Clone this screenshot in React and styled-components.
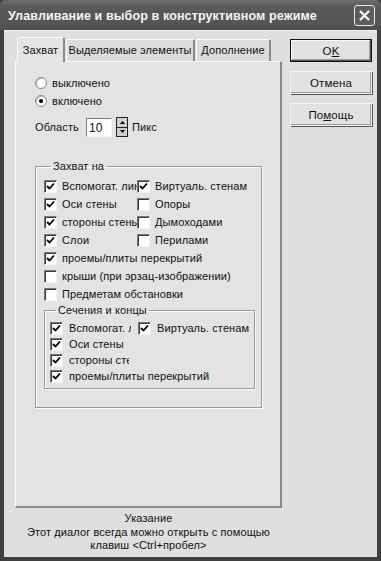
import React from "react";
import styled, { createGlobalStyle } from "styled-components";

const GlobalStyle = createGlobalStyle`
  html, body {
    margin: 0;
    padding: 0;
    background: #3a3a3a;
  }
  * {
    box-sizing: border-box;
  }
`;

const Window = styled.div`
  width: 381px;
  height: 561px;
  display: flex;
  flex-direction: column;
  background: #404040;
  font-family: "Liberation Sans", Arial, sans-serif;
  font-size: 11px;
  letter-spacing: 0.1px;
  color: #111;
`;

const TitleBar = styled.div`
  height: 30px;
  flex: none;
  display: flex;
  align-items: center;
  justify-content: space-between;
  padding: 0 6px 0 8px;
  background: linear-gradient(#6e6e6e, #5a5a5a 20%, #555 80%, #4c4c4c);
  border-radius: 6px 6px 0 0;
`;

const Title = styled.div`
  color: #f4f4f4;
  font-weight: bold;
  font-size: 12.5px;
  letter-spacing: 0.12px;
  padding-top: 1px;
`;

const CloseButton = styled.div`
  width: 21px;
  height: 21px;
  border: 1px solid #e8e8e8;
  border-radius: 3px;
  background: #5e5e5e;
  display: flex;
  align-items: center;
  justify-content: center;
`;

const Body = styled.div`
  flex: 1;
  margin: 0 4px 4px;
  background: #dfdfdf;
  border-top: 1px solid #f2f2f2;
  display: grid;
  grid-template-columns: 267px 82px;
  column-gap: 8px;
  align-items: start;
  padding: 7px 0 0 11px;
`;

const LeftColumn = styled.div`
  display: flex;
  flex-direction: column;
`;

const TabRow = styled.div`
  height: 24px;
  display: flex;
  align-items: flex-end;
  padding-left: 2px;
  position: relative;
  z-index: 1;
  margin-bottom: -1px;
`;

const Tab = styled.div`
  width: ${(p) => p.$w}px;
  height: ${(p) => (p.$active ? 25 : 22)}px;
  margin-left: ${(p) => (p.$active ? 0 : 1)}px;
  padding-top: ${(p) => (p.$active ? 6 : 4)}px;
  text-align: center;
  background: ${(p) => (p.$active ? "#e4e4e4" : "#dcdcdc")};
  border-top: 1px solid #fbfbfb;
  border-left: 1px solid #fbfbfb;
  border-right: 2px solid #8a8a8a;
  border-radius: 2px 2px 0 0;
  margin-bottom: ${(p) => (p.$active ? 0 : 1)}px;
  white-space: nowrap;
`;

const Panel = styled.div`
  height: 447px;
  background: #e3e3e3;
  border-top: 1px solid #fbfbfb;
  border-left: 1px solid #fbfbfb;
  border-right: 2px solid #8a8a8a;
  border-bottom: 2px solid #8a8a8a;
  padding: 12px 6px 0 19px;
  display: flex;
  flex-direction: column;
`;

const RadioRow = styled.label`
  height: 18px;
  display: flex;
  align-items: center;
  gap: 5px;
`;

const RadioDot = styled.span`
  width: 12px;
  height: 12px;
  border-radius: 50%;
  background: #fff;
  border: 1px solid #8a8a8a;
  box-shadow: inset 1px 1px 0 #bdbdbd;
  display: flex;
  align-items: center;
  justify-content: center;
  &::after {
    content: "";
    width: 4px;
    height: 4px;
    border-radius: 50%;
    background: ${(p) => (p.$on ? "#000" : "transparent")};
  }
`;

const AreaRow = styled.div`
  display: flex;
  align-items: center;
  height: 20px;
  margin-top: 7px;
`;

const AreaLabel = styled.span`
  width: 51px;
`;

const NumberBox = styled.div`
  width: 26px;
  height: 19px;
  background: #fff;
  border-top: 1px solid #7a7a7a;
  border-left: 1px solid #7a7a7a;
  border-right: 1px solid #f4f4f4;
  border-bottom: 1px solid #f4f4f4;
  padding: 2px 0 0 2px;
  font-size: 12px;
`;

const Spinner = styled.div`
  width: 12px;
  height: 20px;
  margin: 0 4px;
  display: flex;
  flex-direction: column;
  gap: 1px;
  background: #222;
  border: 1px solid #222;
`;

const SpinHalf = styled.div`
  flex: 1;
  background: #cfcfcf;
  display: flex;
  align-items: center;
  justify-content: center;
`;

const Group = styled.fieldset`
  margin: ${(p) => p.$mt}px 0 0;
  padding: 0 ${(p) => p.$pr}px ${(p) => p.$pb}px ${(p) => p.$pl}px;
  border: 1px solid #9a9a9a;
  box-shadow: inset 1px 1px 0 #fbfbfb, 1px 1px 0 #fbfbfb;
  width: ${(p) => p.$w}px;
  min-width: 0;
`;

const Legend = styled.legend`
  padding: 0 2px;
  margin-left: ${(p) => p.$ml}px;
  line-height: 14px;
`;

const Rows = styled.div`
  display: grid;
  grid-template-columns: ${(p) => p.$col}px auto;
  grid-auto-rows: ${(p) => p.$rh}px;
  padding-top: ${(p) => p.$pt}px;
`;

const CheckItem = styled.div`
  display: flex;
  align-items: center;
  gap: ${(p) => p.$gap}px;
  overflow: hidden;
  white-space: nowrap;
  grid-column: ${(p) => (p.$wide ? "1 / -1" : "auto")};
`;

const Clip = styled.span`
  width: ${(p) => p.$w}px;
  overflow: hidden;
`;

const Box = styled.span`
  flex: none;
  width: 13px;
  height: 13px;
  background: #fff;
  border-top: 1px solid #7a7a7a;
  border-left: 1px solid #7a7a7a;
  border-right: 1px solid #f2f2f2;
  border-bottom: 1px solid #f2f2f2;
  box-shadow: inset 1px 1px 0 #3a3a3a;
  display: flex;
  align-items: center;
  justify-content: center;
`;

const Hint = styled.div`
  margin-top: 4px;
  text-align: center;
  line-height: 13.5px;
  font-size: 11px;
`;

const Buttons = styled.div`
  display: flex;
  flex-direction: column;
  gap: 9px;
  padding-top: 1px;
`;

const Button = styled.div`
  height: 23px;
  display: flex;
  align-items: center;
  justify-content: center;
  background: #e2e2e2;
  border: 1px solid ${(p) => (p.$default ? "#111" : "#f4f4f4")};
  box-shadow: ${(p) =>
    p.$default
      ? "inset -1px -1px 0 #555, inset 1px 1px 0 #f8f8f8, inset -2px -2px 0 #9a9a9a"
      : "1px 1px 0 #555, inset -1px -1px 0 #9a9a9a"};
  font-size: 11.5px;
  u {
    text-decoration: underline;
  }
`;

function Check({ on }) {
  return (
    <Box>
      {on && (
        <svg width="9" height="9" viewBox="0 0 9 9">
          <path d="M1 4 L3.5 6.5 L8 1.5" stroke="#000" strokeWidth="1.8" fill="none" />
        </svg>
      )}
    </Box>
  );
}

const mainItems = [
  { label: "Вспомогат. линии", on: true },
  { label: "Виртуаль. стенам", on: true },
  { label: "Оси стены", on: true },
  { label: "Опоры", on: false },
  { label: "стороны стены", on: true },
  { label: "Дымоходами", on: false },
  { label: "Слои", on: true },
  { label: "Перилами", on: false },
  { label: "проемы/плиты перекрытий", on: true, wide: true },
  { label: "крыши (при эрзац-изображении)", on: false, wide: true },
  { label: "Предметам обстановки", on: false, wide: true },
];

const sectionItems = [
  { label: "Вспомогат. линии", on: true, clip: 62 },
  { label: "Виртуаль. стенам", on: true },
  { label: "Оси стены", on: true, wide: true },
  { label: "стороны стены", on: true, wide: true, clip: 60 },
  { label: "проемы/плиты перекрытий", on: true, wide: true },
];

export default function App() {
  return (
    <>
      <GlobalStyle />
      <Window>
        <TitleBar>
          <Title>Улавливание и выбор в конструктивном режиме</Title>
          <CloseButton>
            <svg width="13" height="13" viewBox="0 0 13 13">
              <path d="M2 2 L11 11 M11 2 L2 11" stroke="#fff" strokeWidth="2.2" />
            </svg>
          </CloseButton>
        </TitleBar>
        <Body>
          <LeftColumn>
            <TabRow>
              <Tab $w={48} $active>
                Захват
              </Tab>
              <Tab $w={129}>Выделяемые элементы</Tab>
              <Tab $w={75}>Дополнение</Tab>
            </TabRow>
            <Panel>
              <RadioRow>
                <RadioDot />
                выключено
              </RadioRow>
              <RadioRow>
                <RadioDot $on />
                включено
              </RadioRow>
              <AreaRow>
                <AreaLabel>Область</AreaLabel>
                <NumberBox>10</NumberBox>
                <Spinner>
                  <SpinHalf>
                    <svg width="5" height="3" viewBox="0 0 5 3">
                      <path d="M0 3 L2.5 0 L5 3 Z" fill="#000" />
                    </svg>
                  </SpinHalf>
                  <SpinHalf>
                    <svg width="5" height="3" viewBox="0 0 5 3">
                      <path d="M0 0 L2.5 3 L5 0 Z" fill="#000" />
                    </svg>
                  </SpinHalf>
                </Spinner>
                Пикс
              </AreaRow>
              <Group $mt={22} $w={227} $pl={8} $pr={6} $pb={18}>
                <Legend $ml={7}>Захват на</Legend>
                <Rows $col={93} $rh={18} $pt={4}>
                  {mainItems.map((it) => (
                    <CheckItem key={it.label} $wide={it.wide} $gap={5}>
                      <Check on={it.on} />
                      {it.label}
                    </CheckItem>
                  ))}
                </Rows>
                <Group $mt={0} $w={211} $pl={5} $pr={4} $pb={4}>
                  <Legend $ml={6}>Сечения и концы</Legend>
                  <Rows $col={88} $rh={16} $pt={3}>
                    {sectionItems.map((it) => (
                      <CheckItem key={it.label + it.wide} $wide={it.wide} $gap={6}>
                        <Check on={it.on} />
                        {it.clip ? <Clip $w={it.clip}>{it.label}</Clip> : it.label}
                      </CheckItem>
                    ))}
                  </Rows>
                </Group>
              </Group>
            </Panel>
            <Hint>
              Указание
              <br />
              Этот диалог всегда можно открыть с помощью
              <br />
              клавиш &lt;Ctrl+пробел&gt;
            </Hint>
          </LeftColumn>
          <Buttons>
            <Button $default>
              O<u>K</u>
            </Button>
            <Button>Отмена</Button>
            <Button>
              По<u>м</u>ощь
            </Button>
          </Buttons>
        </Body>
      </Window>
    </>
  );
}
